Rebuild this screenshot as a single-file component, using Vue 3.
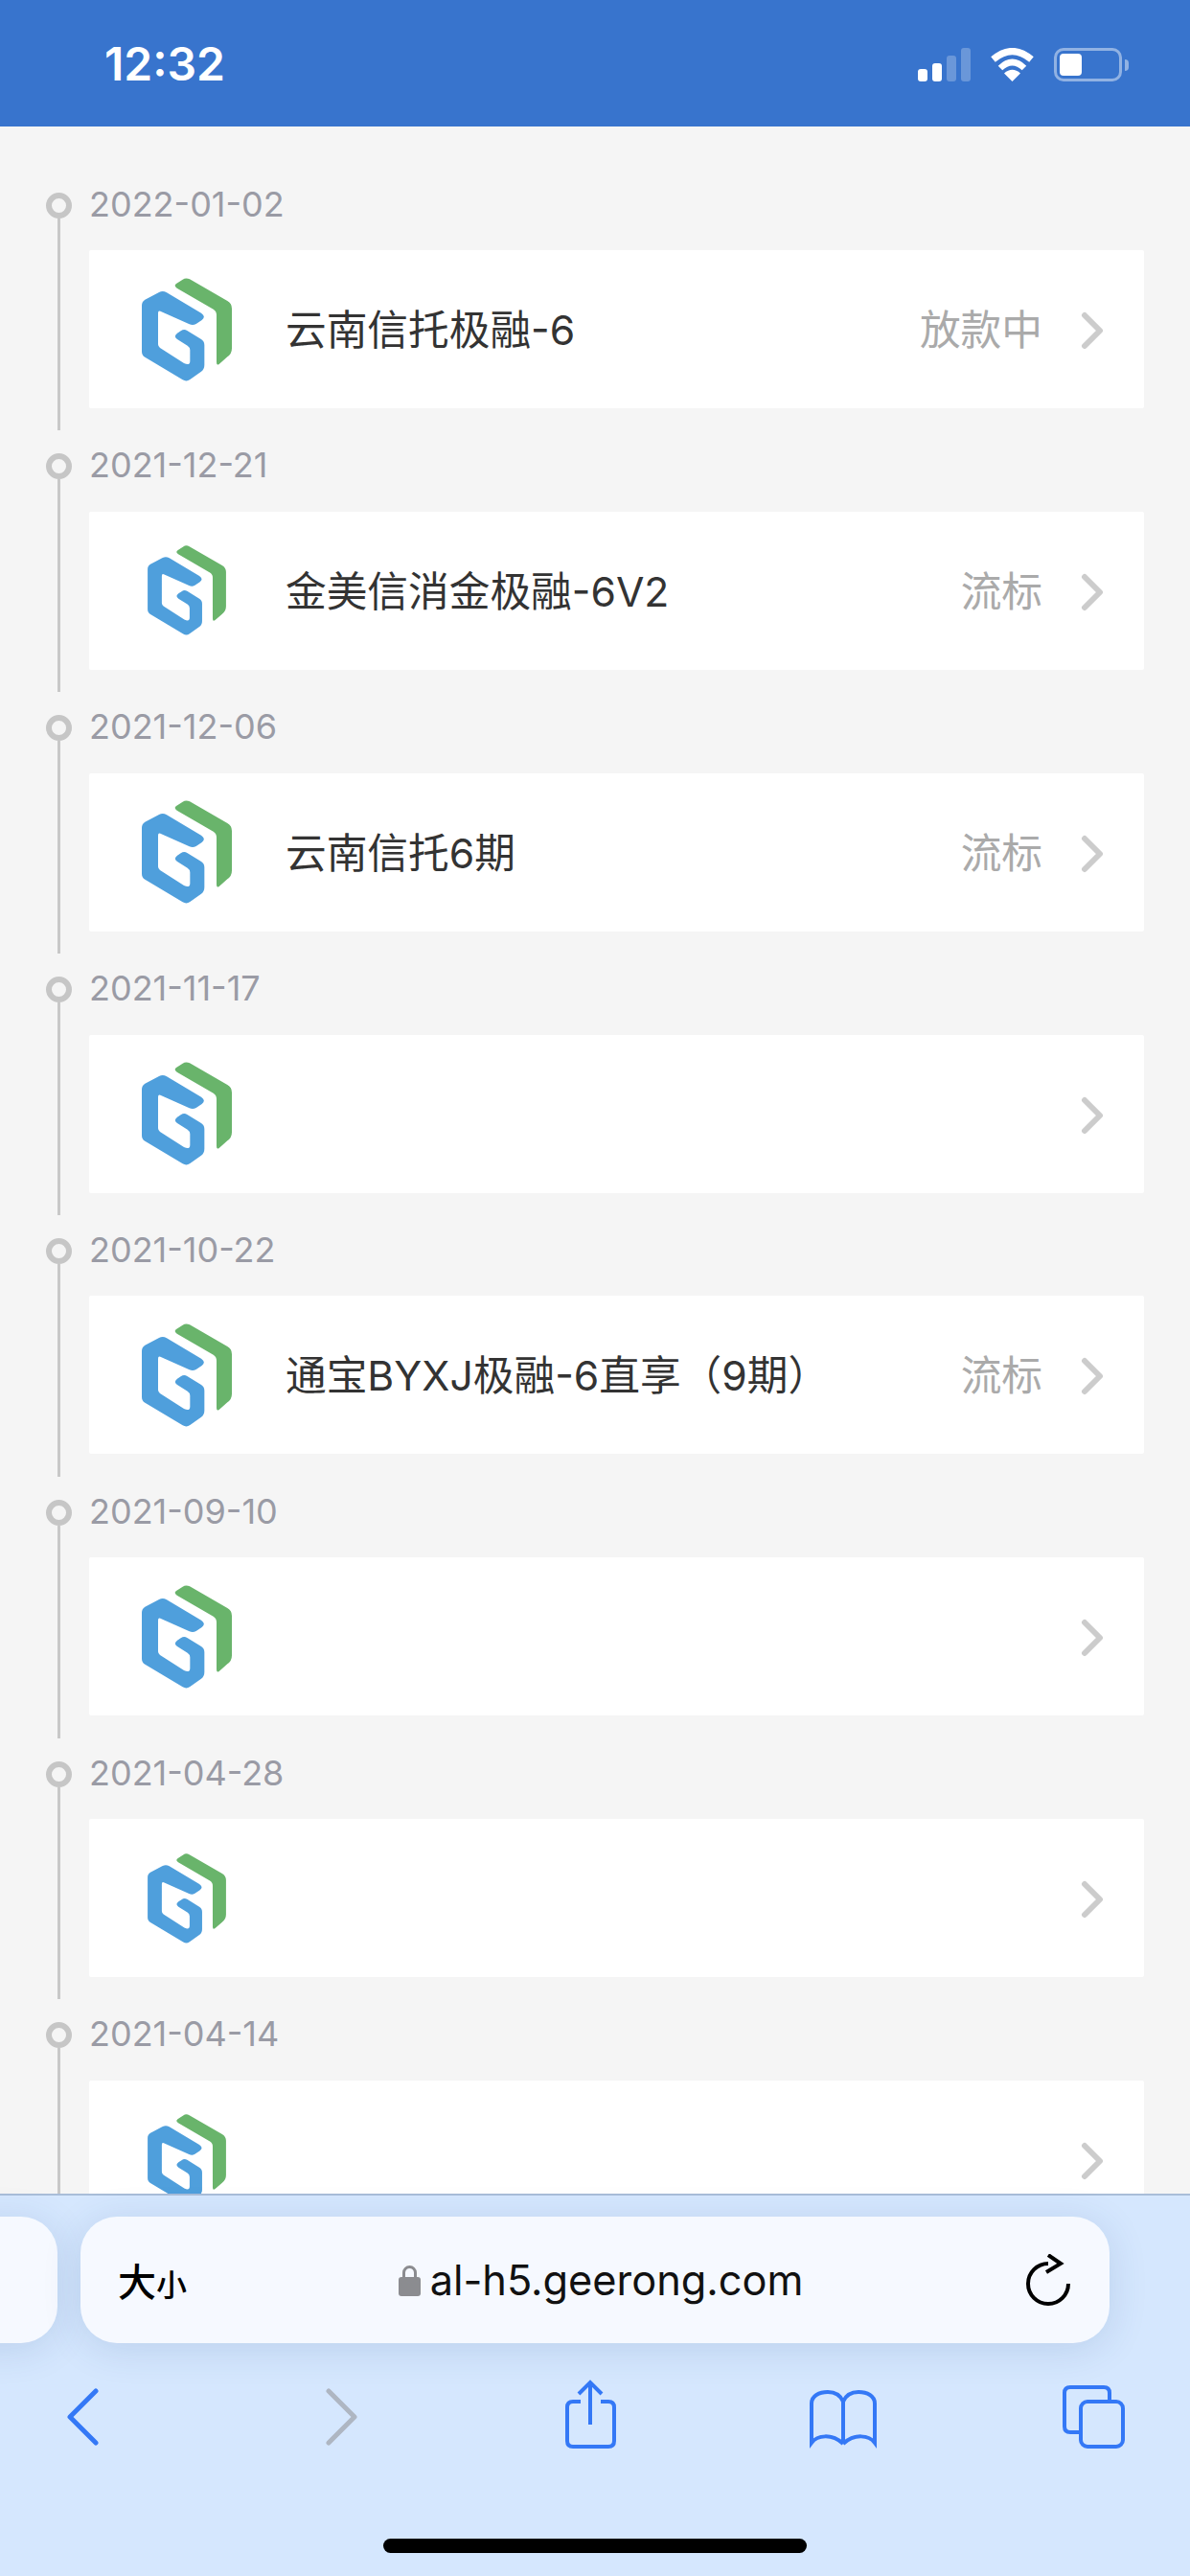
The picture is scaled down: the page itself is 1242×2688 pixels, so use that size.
<script setup>
import { ref } from 'vue';

const records = ref([
    { date: '2022-01-02', title: '云南信托极融-6', status: '放款中' },
    { date: '2021-12-21', title: '金美信消金极融-6V2', status: '流标', small: true },
    { date: '2021-12-06', title: '云南信托6期', status: '流标' },
    { date: '2021-11-17', title: '', status: '' },
    { date: '2021-10-22', title: '通宝BYXJ极融-6直享（9期）', status: '流标' },
    { date: '2021-09-10', title: '', status: '' },
    { date: '2021-04-28', title: '', status: '', small: true },
    { date: '2021-04-14', title: '', status: '', small: true },
]);
</script>

<template>
    <div class="phone">
        <header class="status-bar">
            <span class="time">12:32</span>
            <div class="status-icons">
                <div class="signal">
                    <i class="bar bar1"></i>
                    <i class="bar bar2"></i>
                    <i class="bar bar3"></i>
                    <i class="bar bar4"></i>
                </div>
                <svg class="wifi" width="47" height="35" viewBox="0 0 47 35">
                    <path d="M3.5 12Q23.500 -5 43.500 12" fill="none" stroke="#fff" stroke-width="7" />
                    <path d="M11 21Q23.500 9 36 21" fill="none" stroke="#fff" stroke-width="6.500" />
                    <path d="M23.500 35L15 26.500Q23.500 19 32 26.500Z" fill="#fff" />
                </svg>
                <div class="battery">
                    <div class="battery-body"><div class="battery-fill"></div></div>
                    <div class="battery-tip"></div>
                </div>
            </div>
        </header>

        <main class="timeline">
            <section v-for="item in records" :key="item.date" class="record">
                <div class="rail">
                    <span class="dot"></span>
                    <span class="line"></span>
                </div>
                <div class="record-body">
                    <div class="date">{{ item.date }}</div>
                    <div class="card">
                        <div class="logo-box">
                            <svg :class="['logo', { small: item.small }]" viewBox="54 60 282 324">
                                <path fill="#4f9fdc" d="M54 146Q54 134 64 128L108 105Q120 99 132 106L240 170Q256 181 242 192L224 204Q214 210 203 205L112 164Q105 161 105 170V268Q105 275 111 279L186 327Q205 336 205 320V286Q205 277 197 272L165 252Q152 243 165 233L176 226Q186 219 196 225L240 252Q250 258 250 270V332Q250 346 240 353L205 378Q194 386 182 379L64 308Q54 302 54 290Z" />
                                <path fill="#69b46b" d="M182 65Q192 58 204 64L322 132Q336 140 336 156V280Q336 298 322 307L296 330Q288 335 288 324V176Q288 164 278 158L164 92Q153 85 162 78Z" />
                            </svg>
                        </div>
                        <span class="title">{{ item.title }}</span>
                        <span class="state">{{ item.status }}</span>
                        <svg class="arrow" width="24" height="40" viewBox="0 0 24 40">
                            <path d="M4 4L20 20L4 36" fill="none" stroke="#cccccc" stroke-width="6" stroke-linecap="round" stroke-linejoin="round" />
                        </svg>
                    </div>
                </div>
            </section>
        </main>

        <footer class="browser-bar">
            <div class="tabs-row">
                <div class="pill pill-prev"></div>
                <div class="pill pill-url">
                    <span class="text-size">大<small>小</small></span>
                    <span class="address">
                        <svg width="23" height="33" viewBox="0 0 23 33">
                            <path d="M5.500 15V8.500a6 6 0 0 1 12 0V15" fill="none" stroke="#8b8c90" stroke-width="3" />
                            <rect x="0" y="13" width="23" height="20" rx="3" fill="#8b8c90" />
                        </svg>
                        <span>al-h5.geerong.com</span>
                    </span>
                    <svg class="reload" width="46" height="54" viewBox="0 0 46 54">
                        <path d="M23 10A21 21 0 1 0 44 31" fill="none" stroke="#000" stroke-width="4" />
                        <path d="M23 1L36 10L21 19" fill="none" stroke="#000" stroke-width="4" />
                    </svg>
                </div>
            </div>

            <nav class="toolbar">
                <svg width="90" height="90" viewBox="0 0 90 90">
                    <path d="M59 18L32 45L59 72" fill="none" stroke="#3478f6" stroke-width="5" stroke-linecap="round" stroke-linejoin="round" />
                </svg>
                <svg width="90" height="90" viewBox="0 0 90 90">
                    <path d="M38 18L65 45L38 72" fill="none" stroke="#aeb6c2" stroke-width="5" stroke-linecap="round" stroke-linejoin="round" />
                </svg>
                <svg width="90" height="90" viewBox="0 0 90 90" fill="none" stroke="#3478f6" stroke-width="4">
                    <path d="M37 29H29Q23 29 23 35V70Q23 76 29 76H66Q72 76 72 70V35Q72 29 66 29H58" />
                    <path d="M47 9V53" />
                    <path d="M35 21L47 9L59 21" />
                </svg>
                <svg width="90" height="90" viewBox="0 0 90 90" fill="none" stroke="#3478f6" stroke-width="4">
                    <path d="M47 29V73" />
                    <path d="M47 29C44 22 38 19 31 19C22 19 14 23 14 31V72C20 64 35 62 47 73" />
                    <path d="M47 29C50 22 56 19 63 19C72 19 80 23 80 31V72C74 64 59 62 47 73" />
                </svg>
                <svg width="90" height="90" viewBox="0 0 90 90" fill="none" stroke="#3478f6" stroke-width="4">
                    <path d="M61 28V20Q61 14 55 14H20Q14 14 14 20V55Q14 61 20 61H30" />
                    <rect x="31" y="29" width="44" height="47" rx="7" />
                </svg>
            </nav>

            <div class="home-indicator"></div>
        </footer>
    </div>
</template>

<style scoped>
.phone {
    position: relative;
    width: 1242px;
    height: 2688px;
    overflow: hidden;
    background-color: #f5f5f5;
    font-family: Inter, "Noto Sans CJK SC", sans-serif;
}

.status-bar {
    height: 132px;
    padding: 0 64px 0 109px;
    box-sizing: border-box;
    display: flex;
    justify-content: space-between;
    background-color: #3874cd;
    color: #fff;
}

.time {
    margin-top: 42px;
    font-size: 48px;
    line-height: 50px;
    font-weight: 600;
}

.status-icons {
    margin-top: 50px;
    height: 35px;
    display: flex;
    align-items: flex-end;
}

.signal {
    display: flex;
    align-items: flex-end;
    gap: 5px;
    margin-right: 20px;
}

.bar {
    width: 10px;
    border-radius: 3px;
    background-color: #fff;
}

.bar1 { height: 13px; }
.bar2 { height: 19px; }
.bar3 { height: 27px; background-color: rgba(255, 255, 255, 0.25); }
.bar4 { height: 35px; background-color: rgba(255, 255, 255, 0.25); }

.battery {
    margin-left: 20px;
    display: flex;
    align-items: center;
}

.battery-body {
    width: 71px;
    height: 35px;
    box-sizing: border-box;
    padding: 3px;
    border: 3px solid rgba(255, 255, 255, 0.45);
    border-radius: 10px;
}

.battery-fill {
    width: 23px;
    height: 100%;
    border-radius: 4px;
    background-color: #fff;
}

.battery-tip {
    width: 4px;
    height: 12px;
    margin-left: 3px;
    border-radius: 0 6px 6px 0;
    background-color: rgba(255, 255, 255, 0.45);
}

.timeline {
    padding: 68.500px 48px 0;
}

.record {
    display: flex;
    height: 272.850px;
}

.rail {
    width: 27px;
    margin-right: 18px;
    display: flex;
    flex-direction: column;
    align-items: center;
}

.dot {
    width: 27px;
    height: 27px;
    box-sizing: border-box;
    border: 6px solid #c6c6c6;
    border-radius: 50%;
    flex-shrink: 0;
}

.line {
    width: 3px;
    flex: 1;
    margin-bottom: 24px;
    background-color: #c8c8c8;
}

.record-body {
    width: 1101px;
}

.date {
    height: 60.500px;
    font-size: 36px;
    line-height: 24px;
    color: #9a9ba5;
}

.card {
    height: 165px;
    display: flex;
    align-items: center;
    padding: 0 42px 0 0;
    background-color: #fff;
    border-radius: 2px;
}

.logo-box {
    width: 205px;
    display: flex;
    justify-content: center;
    flex-shrink: 0;
}

.logo {
    width: 94px;
    height: 108px;
    margin-left: -1px;
}

.logo.small {
    width: 82px;
    height: 94px;
}

.title {
    flex: 1;
    margin-bottom: 5px;
    font-size: 42.700px;
    color: #333;
}

.state {
    margin: 0 40px 5px 0;
    font-size: 42.700px;
    color: #aaa;
}

.arrow {
    margin-top: 3px;
}

.browser-bar {
    position: absolute;
    left: 0;
    right: 0;
    bottom: 0;
    height: 399px;
    box-sizing: border-box;
    border-top: 2px solid #a9bdd8;
    background-color: #d5e7fe;
}

.tabs-row {
    display: flex;
    gap: 24px;
    padding-top: 22px;
}

.pill {
    height: 132px;
    border-radius: 38px;
    background-color: #f6f9ff;
    box-shadow: 0 6px 40px rgba(30, 70, 130, 0.14);
}

.pill-prev {
    width: 160px;
    margin-left: -100px;
    flex-shrink: 0;
}

.pill-url {
    width: 1074px;
    flex-shrink: 0;
    box-sizing: border-box;
    padding: 0 41px 0 39px;
    display: flex;
    align-items: center;
    justify-content: space-between;
}

.text-size {
    font-size: 40px;
    font-weight: 500;
    color: #000;
}

.text-size small {
    font-size: 32px;
}

.address {
    display: flex;
    align-items: center;
    gap: 10px;
    margin-right: 12px;
    font-size: 43.300px;
    color: #111;
}

.toolbar {
    display: flex;
    gap: 174px;
    padding: 32px 0 0 41px;
}

.home-indicator {
    position: absolute;
    left: 400px;
    top: 358px;
    width: 442px;
    height: 15px;
    border-radius: 8px;
    background-color: #000;
}
</style>

<style>
html, body {
    background-color: #f5f5f5;
}
</style>
